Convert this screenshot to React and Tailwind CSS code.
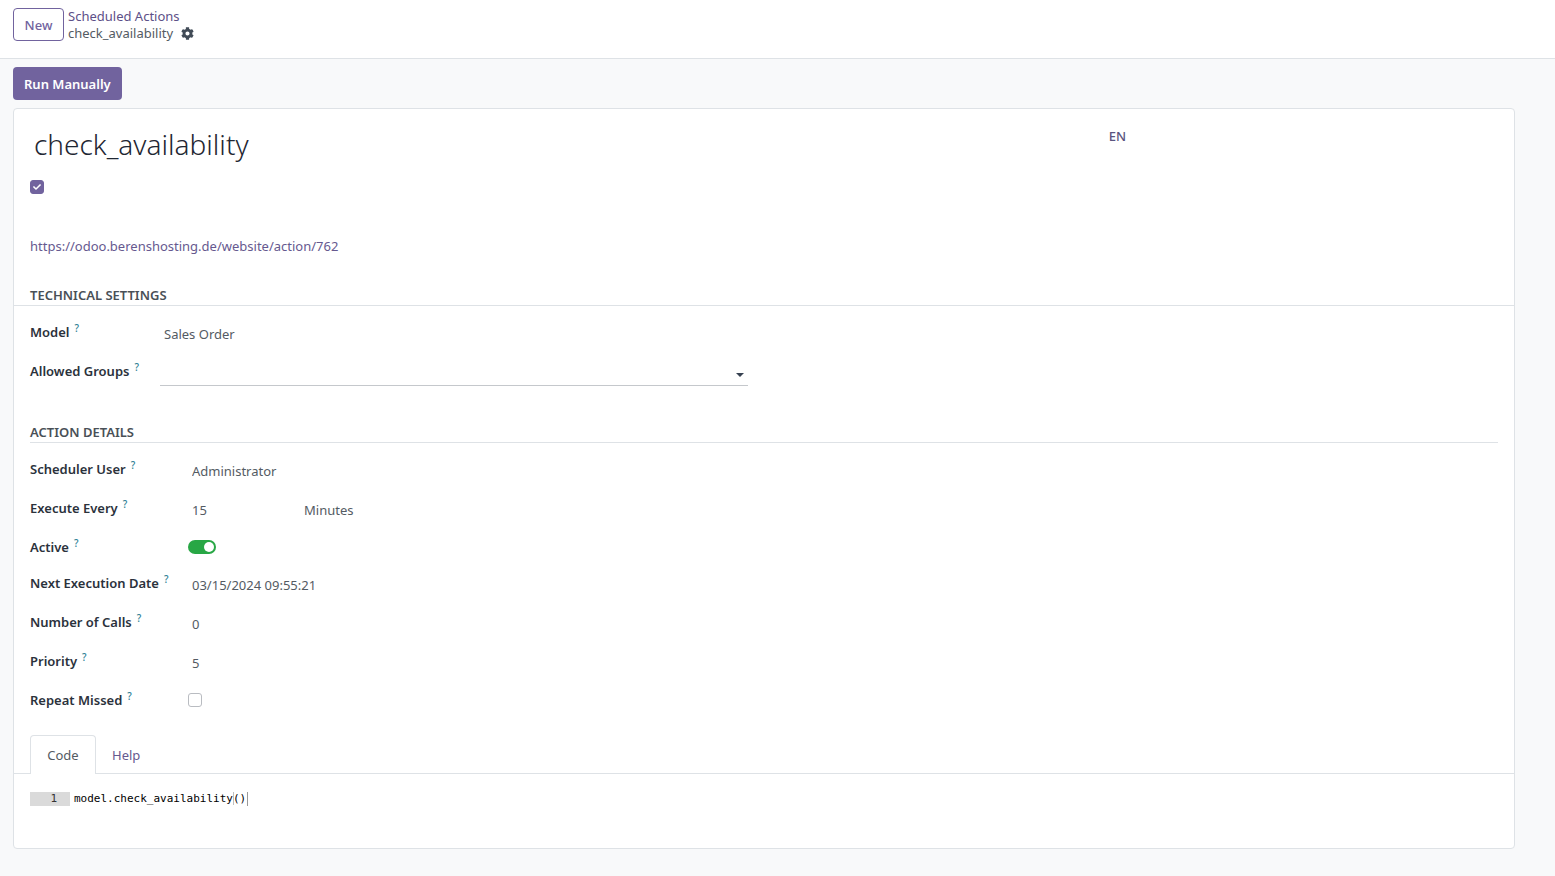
import { useState } from 'react'
import { FaCog, FaCheck } from 'react-icons/fa'

const TABS = ['Code', 'Help']

function FieldRow({ id, label, children, className = 'h-[39px]' }) {
  return (
    <>
      <div className={`${className} pt-px`}>
        <label htmlFor={id} className="whitespace-nowrap font-semibold text-[#2b323c]">
          {label}
          <sup className="top-[-5px] ml-[5px] text-[10px] font-medium text-[#2f7f96]">?</sup>
        </label>
      </div>
      <div className={className}>{children}</div>
    </>
  )
}

function TextInput({ id, value, className = 'w-full' }) {
  return (
    <input
      id={id}
      type="text"
      defaultValue={value}
      className={`${className} h-[26px] bg-transparent px-1 text-[#545b63] outline-none`}
    />
  )
}

function CheckBox({ id, label, checked, onChange }) {
  return (
    <span className="relative block size-3.5">
      <input
        id={id}
        type="checkbox"
        aria-label={label}
        checked={checked}
        onChange={(e) => onChange(e.target.checked)}
        className="block size-3.5 appearance-none rounded-[3px] border border-[#b9bcc1] bg-white checked:border-[#71639e] checked:bg-[#71639e]"
      />
      {checked && <FaCheck className="pointer-events-none absolute inset-0 m-auto size-2 text-white" />}
    </span>
  )
}

function Header() {
  return (
    <header className="flex h-[59px] items-start gap-1 border-b border-[#dee2e6] bg-white px-[13px] pt-2">
      <button className="h-[33px] min-w-[51px] rounded border border-[#71639e] px-2.5 font-medium text-[#71639e]">
        New
      </button>
      <nav className="leading-[17px]">
        <a href="#actions" className="block text-[#5d5088]">Scheduled Actions</a>
        <div className="flex items-center gap-2 text-[#545b63]">
          <span>check_availability</span>
          <button aria-label="Actions">
            <FaCog className="size-[13px] text-[#414b57]" />
          </button>
        </div>
      </nav>
    </header>
  )
}

function TechnicalSettings() {
  return (
    <section>
      <h2 className="-mx-4 border-b border-[#dee2e6] px-4 font-semibold uppercase text-[#495057]">
        Technical Settings
      </h2>
      <div className="grid grid-cols-2 pt-[15px]">
        <div className="grid grid-cols-[130px_1fr] pr-4">
          <FieldRow id="model" label="Model">
            <TextInput id="model" value="Sales Order" />
          </FieldRow>
          <FieldRow id="groups" label="Allowed Groups">
            <div className="relative h-[26px] border-b border-[#c5c8cc]">
              <TextInput id="groups" value="" />
              <span className="pointer-events-none absolute right-1 bottom-2 border-x-4 border-t-4 border-x-transparent border-t-[#374151]" />
            </div>
          </FieldRow>
        </div>
      </div>
    </section>
  )
}

function ActionDetails() {
  const [active, setActive] = useState(true)
  const [repeat, setRepeat] = useState(false)

  return (
    <section className="mt-[23px]">
      <h2 className="border-b border-[#dee2e6] font-semibold uppercase text-[#495057]">Action Details</h2>
      <div className="grid grid-cols-[158px_1fr] pt-[15px]">
        <FieldRow id="user" label="Scheduler User">
          <TextInput id="user" value="Administrator" />
        </FieldRow>
        <FieldRow id="interval" label="Execute Every">
          <div className="flex">
            <TextInput id="interval" value="15" className="w-28" />
            <select
              aria-label="Interval unit"
              defaultValue="Minutes"
              className="h-[26px] w-28 appearance-none bg-transparent px-1 text-[#545b63] outline-none"
            >
              <option>Minutes</option>
              <option>Hours</option>
              <option>Days</option>
              <option>Weeks</option>
              <option>Months</option>
            </select>
          </div>
        </FieldRow>
        <FieldRow id="active" label="Active" className="h-9">
          <input
            id="active"
            type="checkbox"
            role="switch"
            checked={active}
            onChange={(e) => setActive(e.target.checked)}
            className="mt-1 flex h-3.5 w-7 appearance-none items-center rounded-full bg-gray-300 px-0.5 before:size-2.5 before:rounded-full before:bg-white checked:justify-end checked:bg-[#28a745]"
          />
        </FieldRow>
        <FieldRow id="nextcall" label="Next Execution Date">
          <TextInput id="nextcall" value="03/15/2024 09:55:21" />
        </FieldRow>
        <FieldRow id="calls" label="Number of Calls">
          <TextInput id="calls" value="0" />
        </FieldRow>
        <FieldRow id="priority" label="Priority">
          <TextInput id="priority" value="5" />
        </FieldRow>
        <FieldRow id="repeat" label="Repeat Missed">
          <div className="pt-1">
            <CheckBox id="repeat" label="Repeat Missed" checked={repeat} onChange={setRepeat} />
          </div>
        </FieldRow>
      </div>
    </section>
  )
}

function Notebook() {
  const [tab, setTab] = useState('Code')

  return (
    <section className="mt-[7px]">
      <div role="tablist" className="-mx-4 flex border-b border-[#dee2e6] px-4">
        {TABS.map((name) => (
          <button
            key={name}
            role="tab"
            aria-selected={tab === name}
            onClick={() => setTab(name)}
            className={
              tab === name
                ? '-mb-px h-[39px] min-w-[66px] rounded-t border border-b-0 border-[#dee2e6] bg-white px-4 text-[#545b63]'
                : '-mb-px h-[39px] px-4 pt-px text-[#66598f]'
            }
          >
            {name}
          </button>
        ))}
      </div>
      <div className="flex h-[74px] items-start pt-[18px] font-['DejaVu_Sans_Mono',monospace] text-[11px] leading-[14px] text-black">
        {tab === 'Code' && (
          <>
            <span className="w-10 bg-[#dadada] pr-[13px] text-right text-[#333]">1</span>
            <code className="pl-1 font-['DejaVu_Sans_Mono',monospace]">
              model.check_availability
              <span className="shadow-[inset_1px_0_#c0c0c0]">(</span>)
            </code>
            <span className="ml-px h-3.5 w-px bg-[#999]" />
          </>
        )}
      </div>
    </section>
  )
}

export default function App() {
  const [published, setPublished] = useState(true)

  return (
    <div className="min-h-screen bg-[#f8f9fa] font-['Noto_Sans',sans-serif] text-[13px] leading-5">
      <Header />
      <main className="pt-2 pr-10 pb-6 pl-[13px]">
        <button className="h-[33px] rounded bg-[#71639e] px-[11px] font-semibold text-white">
          Run Manually
        </button>
        <div className="mt-2 rounded border border-[#dee2e6] bg-white px-4">
          <div className="flex w-3/4 items-start pt-[17px]">
            <input
              aria-label="Action name"
              defaultValue="check_availability"
              className="h-9 min-w-0 flex-1 bg-transparent px-1 text-[28px] font-light text-[#1f2733] outline-none"
            />
            <button className="px-[5px] font-medium text-[#5a5580]">EN</button>
          </div>
          <div className="pt-[18px]">
            <CheckBox id="published" label="Available on the website" checked={published} onChange={setPublished} />
          </div>
          <a href="#action-762" className="mt-[42px] mb-[29px] block w-fit text-[#66598f]">
            https://odoo.berenshosting.de/website/action/762
          </a>
          <TechnicalSettings />
          <ActionDetails />
          <Notebook />
        </div>
      </main>
    </div>
  )
}
